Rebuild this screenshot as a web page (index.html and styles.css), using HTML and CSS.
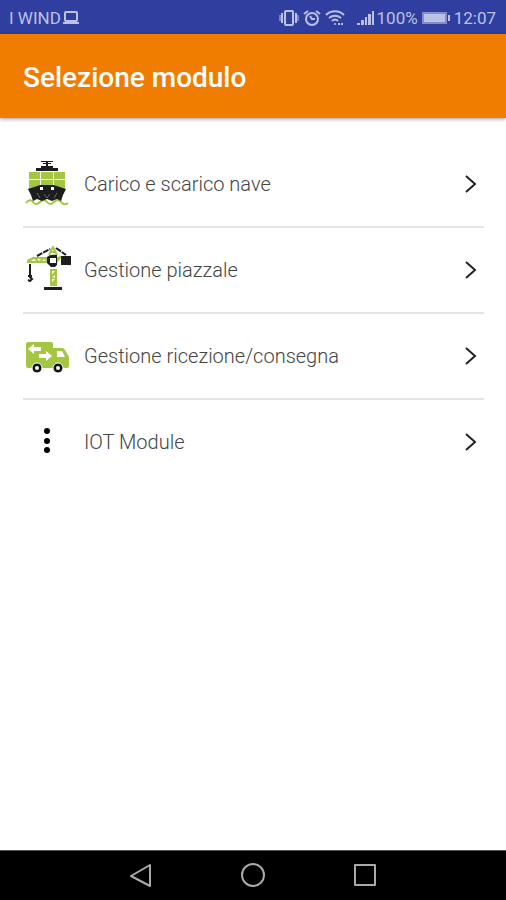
FILE: index.html
```html
<!DOCTYPE html>
<html lang="it">
<head>
    <meta charset="UTF-8">
    <meta name="viewport" content="width=device-width, initial-scale=1.0">
    <title>Selezione modulo</title>
    <link rel="stylesheet" href="styles.css">
</head>
<body>
    <div class="status-bar">
        <div class="carrier">
            <span>I WIND</span>
            <svg width="18" height="16" viewBox="0 0 18 16" fill="none" stroke="currentColor" stroke-width="2">
                <rect x="3" y="2" width="12" height="9" rx="1"/>
                <path d="M1 13h16"/>
            </svg>
        </div>
        <div class="indicators">
            <!-- Vibrazione -->
            <svg width="20" height="18" viewBox="0 0 20 18" fill="none" stroke="currentColor" stroke-width="2">
                <rect x="6" y="2" width="8" height="14" rx="1"/>
                <path d="M3 4v10M17 4v10" />
                <path d="M1 6v6M19 6v6" stroke-width="1"/>
            </svg>
            <!-- Sveglia -->
            <svg width="18" height="18" viewBox="0 0 18 18" fill="none" stroke="currentColor" stroke-width="2">
                <circle cx="9" cy="10" r="6"/>
                <path d="M1 5l4-3M17 5l-4-3"/>
                <path d="M7 7l2 3h3"/>
            </svg>
            <!-- Wi-Fi -->
            <svg class="wifi" width="20" height="18" viewBox="0 0 20 18" fill="none" stroke="currentColor" stroke-width="2">
                <path d="M1 6c5-5 13-5 18 0M4 9c4-3 8-3 12 0M7 12c2-2 4-2 6 0"/>
                <circle cx="10" cy="15" r="1" fill="currentColor" stroke="none"/>
                <path d="M13 15h2M16 15h2"/>
            </svg>
            <!-- Segnale -->
            <svg width="18" height="18" viewBox="0 0 18 18" fill="currentColor">
                <path d="M0 14h3v2H0zM4 11h3v5H4zM8 8h2v8H8zM11 5h3v11h-3zM15 2h2v14h-2z"/>
            </svg>
            <span class="percent">100%</span>
            <svg class="battery" width="28" height="14" viewBox="0 0 28 14" fill="currentColor">
                <path d="M0 1h25v12H0z" opacity="0.6"/>
                <path d="M2 3h21v8H2zM26 4h2v6h-2z"/>
            </svg>
            <span>12:07</span>
        </div>
    </div>

    <header>
        <h1>Selezione modulo</h1>
    </header>

    <main>
        <ul class="modules">
            <li>
                <a href="#nave">
                    <svg class="icon" viewBox="0 0 48 48">
                        <g fill="#a5c643">
                            <path d="M6 12h11v7H6zM18 12h12v7H18zM31 12h11v7H31zM6 20h11v5l-11 4zM18 20h12v5H18zM31 20h11v9l-11-4z"/>
                        </g>
                        <path d="M3 43q4-5 7-1t7 0 7 0 7 0 7 0 7 1" fill="none" stroke="#a5c643" stroke-width="2"/>
                        <g fill="#1d1d1f">
                            <path d="M18 1h5v1h-5zM25 1h5v1h-5zM20 3h8v1h-8zM23 1h2v6h-2zM18 6h12v2h5v3H13V8h5z"/>
                            <path d="M5 29l12-4h14l12 4-3 6-2 6-4-2-5 2-5-2-5 2-5-2-4 2-2-6z"/>
                        </g>
                        <path d="M17 27h3v3h-3zM28 27h3v3h-3z" fill="#fff"/>
                        <path d="M14 33l3 5M34 33l-3 5M21 34l3 4 3-4" fill="none" stroke="#666"/>
                    </svg>
                    <span class="label">Carico e scarico nave</span>
                    <svg class="chevron" viewBox="0 0 12 20"><path d="M1 2l9 8-9 8"/></svg>
                </a>
            </li>
            <li>
                <a href="#piazzale">
                    <svg class="icon" viewBox="0 0 48 48">
                        <path d="M4 14l6-3h14v6H4z" fill="#a5c643"/>
                        <path d="M8 15l3-2 2 2zM14 13h4l-2 2zM19 15l2-2 2 2z" fill="#fff"/>
                        <path d="M26 9l4-8 4 8M27 6h5" fill="none" stroke="#a5c643" stroke-width="2"/>
                        <path d="M14 10L27 3M33 2l10 7" fill="none" stroke="#1d1d1f" stroke-width="2" stroke-dasharray="6 1"/>
                        <path d="M24 11q3-3 10-2v10l-2 2h-4l-4-4z" fill="#1d1d1f"/>
                        <path d="M27 12h6v5h-6z" fill="#fff"/>
                        <path d="M34 11l4-1v2l-4 5z" fill="#a5c643"/>
                        <path d="M38 10h10v9H38z" fill="#1d1d1f"/>
                        <path d="M27 23h7v17h-7z" fill="#a5c643"/>
                        <path d="M29 25h3l-3 3zM32 29v3l-3-1zM29 33h3l-3 3z" fill="#fff"/>
                        <path d="M21 41h18v3H21z" fill="#1d1d1f"/>
                        <path d="M7 18v10" stroke="#1d1d1f" stroke-width="2" fill="none"/>
                        <path d="M7 27v4l2 2-2 2-2-1M5 30h4" stroke="#1d1d1f" stroke-width="2" fill="none"/>
                    </svg>
                    <span class="label">Gestione piazzale</span>
                    <svg class="chevron" viewBox="0 0 12 20"><path d="M1 2l9 8-9 8"/></svg>
                </a>
            </li>
            <li>
                <a href="#ricezione">
                    <svg class="icon" viewBox="0 0 48 48">
                        <path d="M5 10h23q2 0 2 2v4h9q2 0 3 2l4 7v9q0 2-2 2H5q-2 0-2-2V12q0-2 2-2z" fill="#a5c643"/>
                        <path d="M34 19h5l3 6h-8z" fill="#fff"/>
                        <path d="M5 17l6-5v3h7v4h-7v3zM29 24l-6-5v3h-7v4h7v3z" fill="#fff"/>
                        <g fill="#111" stroke="#fff" stroke-width="1">
                            <circle cx="14" cy="36" r="5"/>
                            <circle cx="35" cy="36" r="5"/>
                        </g>
                        <circle cx="14" cy="36" r="2" fill="#fff"/>
                        <circle cx="35" cy="36" r="2" fill="#fff"/>
                    </svg>
                    <span class="label">Gestione ricezione/consegna</span>
                    <svg class="chevron" viewBox="0 0 12 20"><path d="M1 2l9 8-9 8"/></svg>
                </a>
            </li>
            <li>
                <a href="#iot">
                    <svg class="icon" viewBox="0 0 48 48">
                        <circle cx="24" cy="13" r="3"/>
                        <circle cx="24" cy="23" r="3"/>
                        <circle cx="24" cy="32" r="3"/>
                    </svg>
                    <span class="label">IOT Module</span>
                    <svg class="chevron" viewBox="0 0 12 20"><path d="M1 2l9 8-9 8"/></svg>
                </a>
            </li>
        </ul>
    </main>

    <nav class="nav-bar">
        <button type="button" aria-label="Indietro">
            <svg viewBox="0 0 26 26"><path d="M22 2v21L3 13z"/></svg>
        </button>
        <button type="button" aria-label="Home">
            <svg viewBox="0 0 26 26"><circle cx="13" cy="12" r="11"/></svg>
        </button>
        <button type="button" aria-label="Recenti">
            <svg viewBox="0 0 26 26"><rect x="3" y="2" width="20" height="20"/></svg>
        </button>
    </nav>
</body>
</html>
```

FILE: styles.css
```css
* {
    box-sizing: border-box;
}
body {
    margin: 0;
    min-height: 100vh;
    display: flex;
    flex-direction: column;
    background-color: #fff;
    font-family: Roboto, "Liberation Sans", sans-serif;
}
svg {
    display: block;
    flex: none;
}
.status-bar {
    display: flex;
    justify-content: space-between;
    align-items: center;
    height: 34px;
    padding: 2px 10px 0 9px;
    background-color: #303f9f;
    color: #bcc2e6;
    font-size: 17px;
}
.carrier,
.indicators {
    display: flex;
    align-items: center;
    gap: 4px;
}
.carrier {
    gap: 1px;
}
.wifi {
    margin-right: 8px;
}
.percent {
    margin-left: -2px;
}
header {
    display: flex;
    align-items: center;
    height: 84px;
    padding: 2px 23px 0;
    background-color: #f07d00;
    box-shadow: 0 1px 4px rgba(0, 0, 0, 0.4);
}
h1 {
    margin: 0;
    color: #fff;
    font-size: 28px;
    font-weight: 500;
}
main {
    flex: 1;
    padding: 24px 22px 0 23px;
}
.modules {
    list-style: none;
    margin: 0;
    padding: 0;
}
.modules li {
    border-bottom: 2px solid #e4e4e4;
}
.modules li:last-child {
    border-bottom: none;
}
.modules a {
    display: flex;
    align-items: center;
    height: 84px;
    padding-right: 7px;
    color: #444;
    font-size: 20px;
    font-weight: 300;
    text-decoration: none;
}
.icon {
    width: 48px;
    height: 48px;
}
.label {
    flex: 1;
    margin-left: 13px;
}
.chevron {
    width: 12px;
    height: 20px;
    fill: none;
    stroke: #222;
    stroke-width: 2;
}
.nav-bar {
    display: flex;
    justify-content: center;
    align-items: center;
    gap: 86px;
    height: 50px;
    background-color: #000;
    border-top: 1px solid #555;
}
.nav-bar button {
    padding: 0;
    border: none;
    background: none;
    cursor: pointer;
}
.nav-bar svg {
    width: 26px;
    height: 26px;
    fill: none;
    stroke: #aaa;
    stroke-width: 2;
    stroke-linejoin: round;
}
```
